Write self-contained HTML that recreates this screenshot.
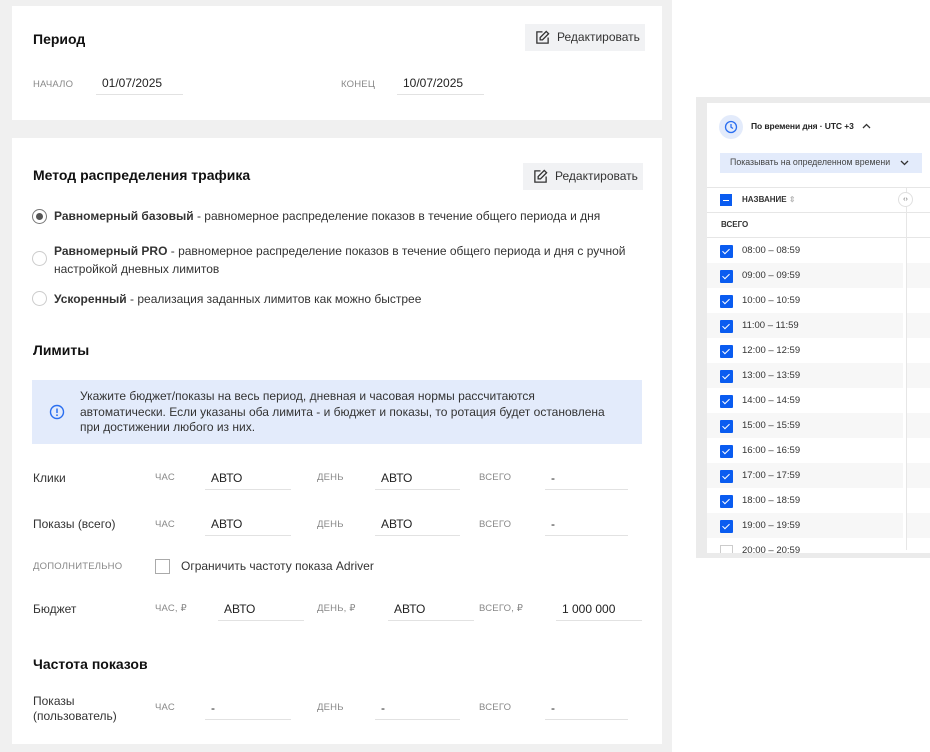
<!DOCTYPE html>
<html><head><meta charset="utf-8"><style>
*{box-sizing:border-box;margin:0;padding:0}
body{width:930px;height:752px;position:relative;overflow:hidden;background:#fff;font-family:"Liberation Sans",sans-serif;color:#222;font-size:12px}
.a{position:absolute;white-space:nowrap}
.bg{position:absolute;left:0;top:0;width:672px;height:752px;background:#f0f0f0}
.card{position:absolute;left:12px;width:650px;background:#fff}
h3{position:absolute;font-size:14px;font-weight:bold;color:#111}
.btn{position:absolute;background:#f1f2f4;height:27px;font-size:12px;color:#333;padding-left:32px;line-height:27px}
.btn svg{position:absolute;left:10px;top:6px}
.lbl{position:absolute;font-size:9.5px;color:#888;text-transform:uppercase;letter-spacing:.2px}
.inp{position:absolute;border-bottom:1px solid #e2e2e2;height:22px;font-size:12px;color:#222;padding-left:6px;line-height:20px}
.radio{position:absolute;width:15px;height:15px;border:1px solid #ccc;border-radius:50%;background:#fff}
.t{position:absolute;font-size:12px;color:#333;white-space:nowrap}
.cb{position:absolute;left:720px;width:13px;height:13px;background:#0a5cf0;border-radius:1px}
.cb::after{content:"";position:absolute;left:4px;top:2px;width:3px;height:6px;border:solid #fff;border-width:0 1.5px 1.5px 0;transform:rotate(45deg)}
.row{position:absolute;left:707px;width:196px;height:25px}
.rt{position:absolute;left:742px;font-size:9.5px;color:#333}
</style></head><body>
<div class="bg"></div>
<div class="card" style="top:6px;height:114px"></div>
<div class="card" style="top:138px;height:606px"></div>

<h3 style="left:33px;top:31px">Период</h3>
<div class="btn" style="left:525px;top:24px;width:120px"><svg width="15" height="15" viewBox="0 0 16 16" fill="none" stroke="#333" stroke-width="1.4"><path d="M8 2H2v12h12V8"/><path d="M12 1.5l2.5 2.5L8 10.5H5.5V8z"/></svg>Редактировать</div>
<div class="lbl" style="left:33px;top:79px">Начало</div>
<div class="inp" style="left:96px;top:73px;width:87px">01/07/2025</div>
<div class="lbl" style="left:341px;top:79px">Конец</div>
<div class="inp" style="left:397px;top:73px;width:87px">10/07/2025</div>

<h3 style="left:33px;top:167px">Метод распределения трафика</h3>
<div class="btn" style="left:523px;top:163px;width:120px"><svg width="15" height="15" viewBox="0 0 16 16" fill="none" stroke="#333" stroke-width="1.4"><path d="M8 2H2v12h12V8"/><path d="M12 1.5l2.5 2.5L8 10.5H5.5V8z"/></svg>Редактировать</div>
<div class="radio" style="left:32px;top:209px;border-color:#777"><div style="position:absolute;left:3px;top:3px;width:7px;height:7px;border-radius:50%;background:#555"></div></div>
<div class="t" style="left:54px;top:209px"><b>Равномерный базовый</b> - равномерное распределение показов в течение общего периода и дня</div>
<div class="radio" style="left:32px;top:251px"></div>
<div class="t" style="left:54px;top:242px;line-height:18px"><b>Равномерный PRO</b> - равномерное распределение показов в течение общего периода и дня с ручной<br>настройкой дневных лимитов</div>
<div class="radio" style="left:32px;top:291px"></div>
<div class="t" style="left:54px;top:292px"><b>Ускоренный</b> - реализация заданных лимитов как можно быстрее</div>

<h3 style="left:33px;top:342px">Лимиты</h3>
<div class="a" style="left:32px;top:380px;width:610px;height:64px;background:#e3ebfb"></div>
<svg class="a" style="left:49px;top:404px" width="16" height="16" viewBox="0 0 16 16"><circle cx="8" cy="8" r="6.5" fill="none" stroke="#2a6ef0" stroke-width="1.4"/><path d="M8 4.5v4.5" stroke="#2a6ef0" stroke-width="1.5"/><circle cx="8" cy="11.2" r=".9" fill="#2a6ef0"/></svg>
<div class="t" style="left:80px;top:389px;line-height:15.5px;color:#333">Укажите бюджет/показы на весь период, дневная и часовая нормы рассчитаются<br>автоматически. Если указаны оба лимита - и бюджет и показы, то ротация будет остановлена<br>при достижении любого из них.</div>

<div class="t" style="left:33px;top:471px">Клики</div>
<div class="lbl" style="left:155px;top:472px">Час</div><div class="inp" style="left:205px;top:468px;width:86px">АВТО</div>
<div class="lbl" style="left:317px;top:472px">День</div><div class="inp" style="left:375px;top:468px;width:85px">АВТО</div>
<div class="lbl" style="left:479px;top:472px">Всего</div><div class="inp" style="left:545px;top:468px;width:83px">-</div>

<div class="t" style="left:33px;top:517px">Показы (всего)</div>
<div class="lbl" style="left:155px;top:519px">Час</div><div class="inp" style="left:205px;top:514px;width:86px">АВТО</div>
<div class="lbl" style="left:317px;top:519px">День</div><div class="inp" style="left:375px;top:514px;width:85px">АВТО</div>
<div class="lbl" style="left:479px;top:519px">Всего</div><div class="inp" style="left:545px;top:514px;width:83px">-</div>

<div class="lbl" style="left:33px;top:561px">Дополнительно</div>
<div class="a" style="left:155px;top:559px;width:15px;height:15px;border:1px solid #aaa;background:#fff"></div>
<div class="t" style="left:181px;top:559px">Ограничить частоту показа Adriver</div>

<div class="t" style="left:33px;top:602px">Бюджет</div>
<div class="lbl" style="left:155px;top:603px">Час, ₽</div><div class="inp" style="left:218px;top:599px;width:86px">АВТО</div>
<div class="lbl" style="left:317px;top:603px">День, ₽</div><div class="inp" style="left:388px;top:599px;width:86px">АВТО</div>
<div class="lbl" style="left:479px;top:603px">Всего, ₽</div><div class="inp" style="left:556px;top:599px;width:86px">1 000 000</div>

<h3 style="left:33px;top:656px">Частота показов</h3>
<div class="t" style="left:33px;top:694px;line-height:15px">Показы<br>(пользователь)</div>
<div class="lbl" style="left:155px;top:702px">Час</div><div class="inp" style="left:205px;top:698px;width:86px">-</div>
<div class="lbl" style="left:317px;top:702px">День</div><div class="inp" style="left:375px;top:698px;width:85px">-</div>
<div class="lbl" style="left:479px;top:702px">Всего</div><div class="inp" style="left:545px;top:698px;width:83px">-</div>

<!-- right panel -->
<div class="a" style="left:696px;top:97px;width:234px;height:461px;background:#ebebeb"></div>
<div class="a" style="left:707px;top:103px;width:223px;height:450px;background:#fff;overflow:hidden"></div>
<div class="a" style="left:719px;top:115px;width:24px;height:24px;border-radius:50%;background:#e3ebfb"></div>
<svg class="a" style="left:724px;top:120px" width="14" height="14" viewBox="0 0 14 14" fill="none" stroke="#2a6ef0" stroke-width="1.3"><circle cx="7" cy="7" r="5.5"/><path d="M7 4v3.2l2 1.3"/></svg>
<div class="a" style="left:751px;top:121px;font-size:8.5px;color:#222;font-weight:bold;letter-spacing:-.1px">По времени дня · UTC +3</div>
<svg class="a" style="left:862px;top:123px" width="9" height="6" viewBox="0 0 9 6" fill="none" stroke="#333" stroke-width="1.3"><path d="M1 5l3.5-3.5L8 5"/></svg>
<div class="a" style="left:720px;top:153px;width:202px;height:20px;background:#e3ebfb"></div>
<div class="a" style="left:730px;top:157px;font-size:8.8px;color:#444">Показывать на определенном времени</div>
<svg class="a" style="left:900px;top:160px" width="9" height="6" viewBox="0 0 9 6" fill="none" stroke="#333" stroke-width="1.3"><path d="M1 1l3.5 3.5L8 1"/></svg>
<div class="a" style="left:707px;top:187px;width:223px;height:1px;background:#e6e6e6"></div>
<div class="a" style="left:707px;top:212px;width:223px;height:1px;background:#e6e6e6"></div>
<div class="a" style="left:707px;top:237px;width:223px;height:1px;background:#e6e6e6"></div>
<div class="a" style="left:906px;top:188px;width:1px;height:362px;background:#e6e6e6"></div>
<div class="a" style="left:898px;top:192px;width:15px;height:15px;border-radius:50%;border:1px solid #e0e0e0;background:#fff;font-size:7px;line-height:13px;text-align:center;color:#666">‹›</div>
<div class="a" style="left:720px;top:194px;width:12px;height:12px;background:#0a5cf0"><div style="position:absolute;left:3px;top:5.5px;width:6px;height:1.3px;background:#fff"></div></div>
<div class="a" style="left:742px;top:195px;font-size:8px;font-weight:bold;color:#333">НАЗВАНИЕ <span style="color:#bbb">⇕</span></div>
<div class="a" style="left:721px;top:220px;font-size:8px;font-weight:bold;color:#333">ВСЕГО</div>

<div class="row" style="top:263px;background:#f7f7f7"></div>
<div class="row" style="top:313px;background:#f7f7f7"></div>
<div class="row" style="top:363px;background:#f7f7f7"></div>
<div class="row" style="top:413px;background:#f7f7f7"></div>
<div class="row" style="top:463px;background:#f7f7f7"></div>
<div class="row" style="top:513px;background:#f7f7f7"></div>
<div class="a" style="left:907px;top:263px;width:23px;height:25px;background:#f7f7f7"></div>
<div class="a" style="left:907px;top:313px;width:23px;height:25px;background:#f7f7f7"></div>
<div class="a" style="left:907px;top:363px;width:23px;height:25px;background:#f7f7f7"></div>
<div class="a" style="left:907px;top:413px;width:23px;height:25px;background:#f7f7f7"></div>
<div class="a" style="left:907px;top:463px;width:23px;height:25px;background:#f7f7f7"></div>
<div class="a" style="left:907px;top:513px;width:23px;height:25px;background:#f7f7f7"></div>

<div class="cb" style="top:245px"></div><div class="rt" style="top:245px">08:00 – 08:59</div>
<div class="cb" style="top:270px"></div><div class="rt" style="top:270px">09:00 – 09:59</div>
<div class="cb" style="top:295px"></div><div class="rt" style="top:295px">10:00 – 10:59</div>
<div class="cb" style="top:320px"></div><div class="rt" style="top:320px">11:00 – 11:59</div>
<div class="cb" style="top:345px"></div><div class="rt" style="top:345px">12:00 – 12:59</div>
<div class="cb" style="top:370px"></div><div class="rt" style="top:370px">13:00 – 13:59</div>
<div class="cb" style="top:395px"></div><div class="rt" style="top:395px">14:00 – 14:59</div>
<div class="cb" style="top:420px"></div><div class="rt" style="top:420px">15:00 – 15:59</div>
<div class="cb" style="top:445px"></div><div class="rt" style="top:445px">16:00 – 16:59</div>
<div class="cb" style="top:470px"></div><div class="rt" style="top:470px">17:00 – 17:59</div>
<div class="cb" style="top:495px"></div><div class="rt" style="top:495px">18:00 – 18:59</div>
<div class="cb" style="top:520px"></div><div class="rt" style="top:520px">19:00 – 19:59</div>
<div class="a" style="left:707px;top:540px;width:199px;height:13px;overflow:hidden"><div style="position:absolute;left:13px;top:5px;width:13px;height:13px;border:1px solid #ccc"></div><div style="position:absolute;left:35px;top:5px;font-size:9.5px;color:#333">20:00 – 20:59</div></div>
</body></html>
